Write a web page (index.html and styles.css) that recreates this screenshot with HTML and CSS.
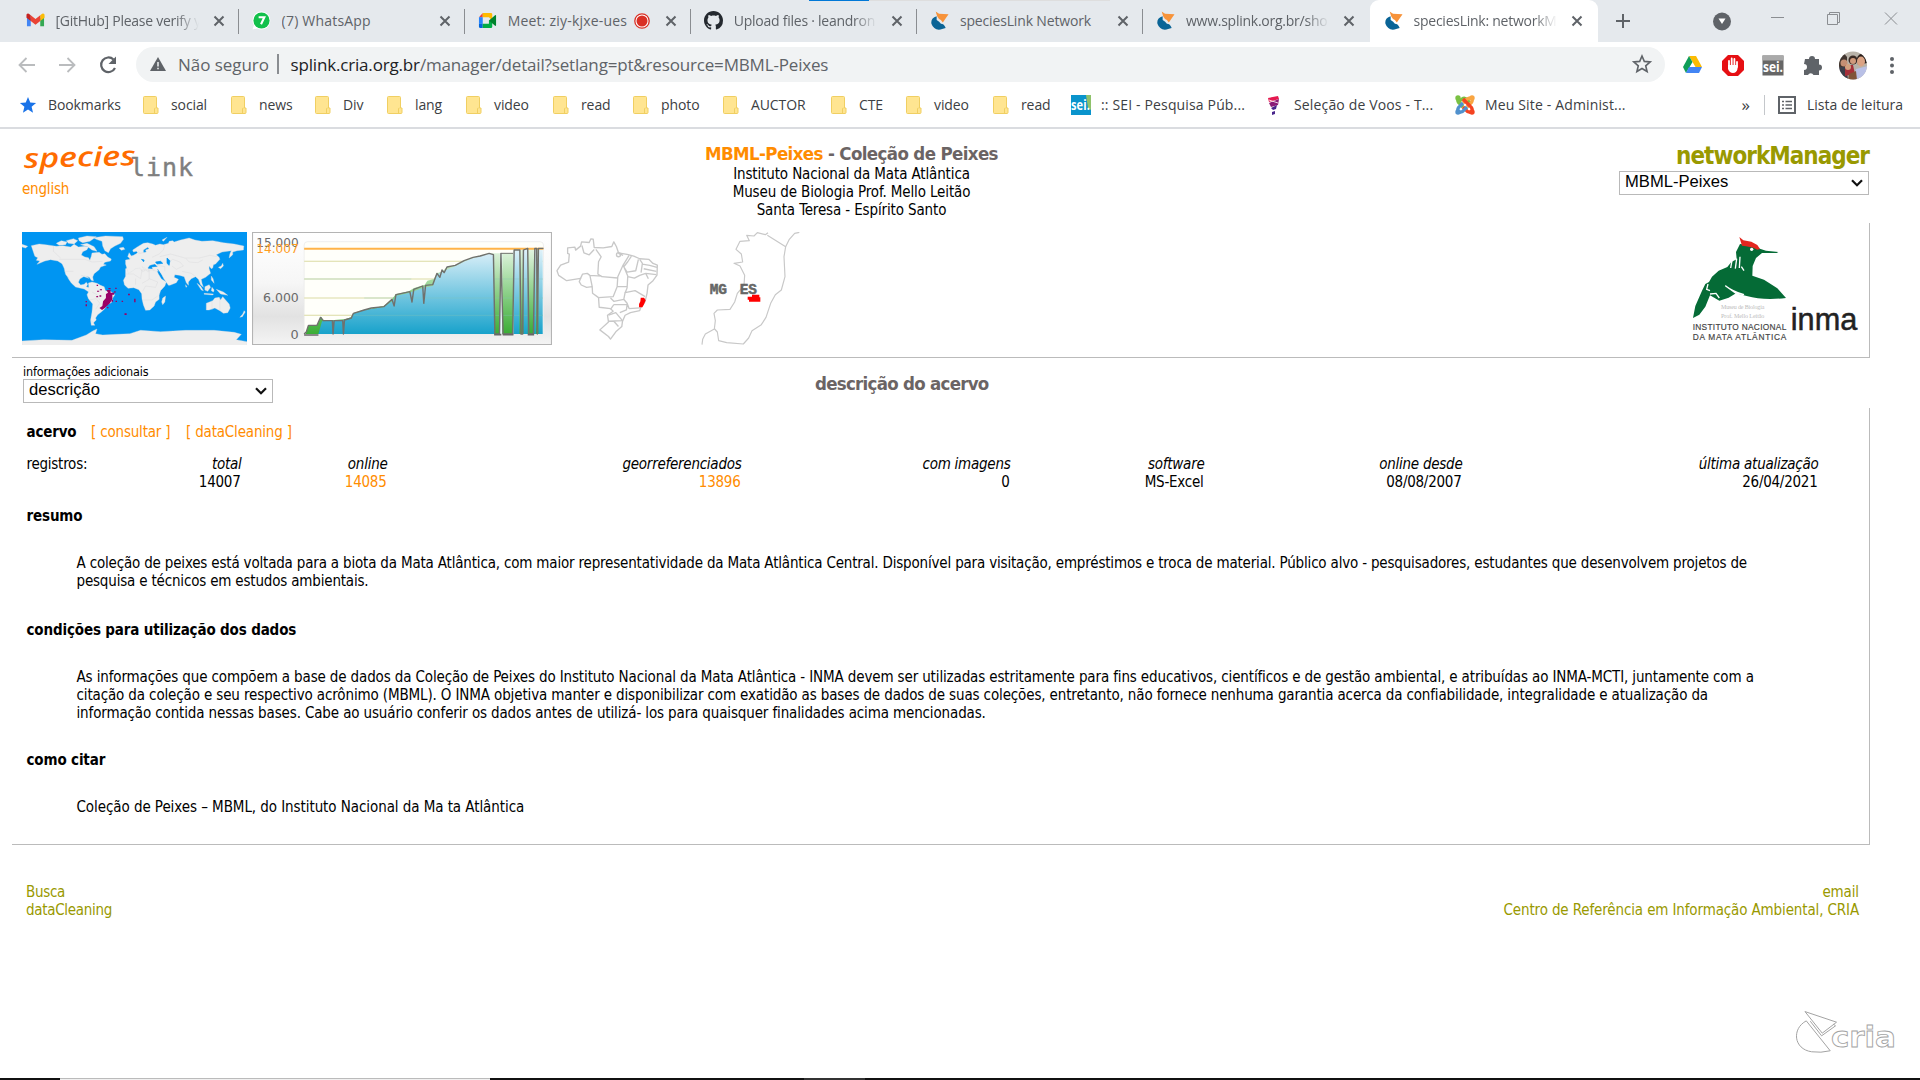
FILE: index.html
```html
<!DOCTYPE html>
<html lang="pt">
<head>
<meta charset="utf-8">
<title>speciesLink: networkManager</title>
<link rel="stylesheet" href="styles.css">
</head>
<body>
<svg class="defs" width="0" height="0">
  <symbol id="close" viewBox="0 0 12 12"><path d="M1.5 1.5l9 9M10.5 1.5l-9 9" stroke="#5f6368" stroke-width="2" fill="none"/></symbol>
  <symbol id="folder" viewBox="0 0 16 18"><path d="M1.500.5h11a1 1 0 0 1 1 1v10.500h1.500v4.500a1 1 0 0 1-1 1H1.500a1 1 0 0 1-1-1v-15a1 1 0 0 1 1-1z" fill="#ffe591" stroke="#f0cf62"/><path d="M11.500 17v-4a1 1 0 0 1 1-1" fill="none" stroke="#f0cf62"/></symbol>
  <symbol id="splink" viewBox="0 0 20 20"><path d="M7 5.500Q.5 7.500 1.500 13.500 4 20.500 11 19.500l5.500-1.500q-1.500-4.500-5-4.500Q10 11 7 9.500z" fill="#0a6496"/><path d="M6 .5l3.500 2.500L19.500 3.500 13.500 12l-2-2.500-2-1-2-3z" fill="#f7933a"/></symbol>
  <symbol id="chev" viewBox="0 0 12 8"><path d="M1 1.200l5 5 5-5" fill="none" stroke="#111" stroke-width="2.200"/></symbol>
</svg>

<div class="tabs">
  <div class="tab">
    <svg class="fav" viewBox="0 0 20 16"><path d="M1 3v11h4V6z" fill="#4285f4"/><path d="M19 3v11h-4V6z" fill="#34a853"/><path d="M15 2.500L17 1a1.600 1.600 0 0 1 2.500 1.500V5L15 8.500z" fill="#fbbc04"/><path d="M5 2.500l5 4 5-4v6l-5 4-5-4z" fill="#ea4335"/><path d="M5 2.500L3 1A1.600 1.600 0 0 0 .5 2.500V5L5 8.500z" fill="#c5221f"/></svg>
    <span class="tab-title fade">[GitHub] Please verify y</span><svg class="x"><use href="#close"/></svg>
  </div>
  <div class="tab">
    <svg class="fav" viewBox="0 0 20 20"><path d="M10 .5a9.500 9.500 0 1 1-4.500 18L.5 19.500 2 15A9.500 9.500 0 0 1 10 .5z" fill="#fff"/><circle cx="10" cy="10" r="8.500" fill="#12c04b"/><path d="M7 6.500h6L9.500 14" fill="none" stroke="#fff" stroke-width="2.200"/></svg>
    <span class="tab-title wide">(7) WhatsApp</span><svg class="x"><use href="#close"/></svg>
  </div>
  <div class="tab">
    <svg class="fav" viewBox="0 0 20 18"><path d="M5 1v4.500H1z" fill="#ea4335"/><path d="M1 5.500h4v7H1z" fill="#2684fc"/><path d="M1 12.500h4V17H2.500A1.500 1.500 0 0 1 1 15.500z" fill="#0066da"/><path d="M5 1h8.500A1.500 1.500 0 0 1 15 2.500V9l-3.500-3.500H5z" fill="#ffba00"/><path d="M5 12.500h6.500V9L15 9v6.500a1.500 1.500 0 0 1-1.500 1.500H5z" fill="#00ac47"/><path d="M11.500 9L18 3.500c.5-.4 1 0 1 .6v9.800c0 .6-.5 1-1 .6z" fill="#00832d"/></svg>
    <span class="tab-title short wide">Meet: ziy-kjxe-ues</span>
    <svg class="rec" viewBox="0 0 16 16"><circle cx="8" cy="8" r="7.200" fill="#fff" stroke="#d93025" stroke-width="1.300"/><circle cx="8" cy="8" r="5.500" fill="#d93025"/></svg>
    <svg class="x"><use href="#close"/></svg>
  </div>
  <div class="tab">
    <svg class="fav" viewBox="0 0 16 16"><path fill="#24292f" d="M8 0C3.580 0 0 3.580 0 8c0 3.540 2.290 6.530 5.470 7.590.4.070.55-.17.55-.38 0-.19-.01-.82-.01-1.490-2.010.37-2.530-.49-2.690-.94-.09-.23-.48-.94-.82-1.130-.28-.15-.68-.52-.01-.53.63-.01 1.080.58 1.230.82.72 1.210 1.870.87 2.330.66.070-.52.28-.87.51-1.070-1.780-.2-3.640-.89-3.640-3.950 0-.87.31-1.590.82-2.150-.08-.2-.36-1.020.08-2.120 0 0 .67-.21 2.200.82.64-.18 1.320-.27 2-.27s1.360.09 2 .27c1.530-1.040 2.200-.82 2.200-.82.44 1.100.16 1.920.08 2.120.51.56.82 1.270.82 2.150 0 3.070-1.870 3.750-3.650 3.950.29.25.54.73.54 1.480 0 1.070-.01 1.930-.01 2.200 0 .21.15.46.55.38A8.010 8.010 0 0 0 16 8c0-4.420-3.580-8-8-8z"/></svg>
    <span class="tab-title fade">Upload files · leandron</span><svg class="x"><use href="#close"/></svg>
  </div>
  <div class="tab"><svg class="fav"><use href="#splink"/></svg><span class="tab-title">speciesLink Network</span><svg class="x"><use href="#close"/></svg></div>
  <div class="tab"><svg class="fav"><use href="#splink"/></svg><span class="tab-title fade">www.splink.org.br/sho</span><svg class="x"><use href="#close"/></svg></div>
  <div class="tab active"><svg class="fav"><use href="#splink"/></svg><span class="tab-title fade">speciesLink: networkM</span><svg class="x"><use href="#close"/></svg></div>
  <svg class="plus" viewBox="0 0 16 16"><path d="M8 1v14M1 8h14" stroke="#5f6368" stroke-width="2"/></svg>
  <svg class="win" viewBox="0 0 200 42"><circle cx="14" cy="21.500" r="9" fill="#5f6368"/><path d="M10.500 18.500h7l-3.500 5.500z" fill="#fff"/><g fill="none" stroke="#8b8e92"><path d="M63 17.500h13M119.500 14.500h10v10h-10zM121.500 14.500v-2h10v10h-2M177 12.500l12 12M189 12.500l-12 12"/></g></svg>
  <div class="topline"></div>
</div>

<div class="toolbar">
  <svg class="nav" viewBox="0 0 118 24"><g fill="none" stroke-width="1.800"><path d="M27 12H12M18.500 5l-7 7 7 7M51 12h15M59.500 5l7 7-7 7" stroke="#babcbe"/><path d="M105.500 6.500A7.300 7.300 0 1 0 107 15" stroke="#5f6368" stroke-width="2.200"/></g><path d="M108 3.500V11h-7.500z" fill="#5f6368"/></svg>
  <div class="omni">
    <svg class="warn" viewBox="0 0 16 14"><path d="M8 0l8 14H0z" fill="#5f6368"/><path d="M8 5v4.500M8 10.700v1.600" stroke="#f1f3f4" stroke-width="1.500"/></svg>
    <span class="insecure">Não seguro</span><span class="bar"></span>
    <span class="url"><b>splink.cria.org.br</b>/manager/detail?setlang=pt&amp;resource=MBML-Peixes</span>
    <svg class="star" viewBox="0 0 20 20"><path d="M10 2l2.300 5.400 5.900.5-4.500 3.900 1.400 5.700-5.100-3-5.100 3 1.400-5.700L1.800 7.900l5.900-.5z" fill="none" stroke="#5f6368" stroke-width="1.600"/></svg>
  </div>
  <svg class="exts" viewBox="0 0 240 40">
    <path d="M15 11h7l6 11h-6.500z" fill="#fbbc04"/><path d="M15 11L9 22l3 6 6.500-11z" fill="#0f9d58"/><path d="M12 28h13l3-6H15z" fill="#4285f4"/>
    <path d="M54 10h10l6 6v9l-6 6H54l-6-6v-9z" fill="#e60f13"/><path d="M55 22v-6m2.700 5v-7.500m2.700 7.500v-7m2.600 8v-5" stroke="#fff" stroke-width="1.800" stroke-linecap="round"/><path d="M54 20h9.500v4q-1 4-4.500 4T54 24z" fill="#fff"/>
    <rect x="88.500" y="10.500" width="21" height="20" fill="#666"/><rect x="88.500" y="10.500" width="21" height="5" fill="#aaa"/><text x="89" y="27" class="sei" textLength="20" lengthAdjust="spacingAndGlyphs">sei.</text>
    <path d="M131 14h4a3 3 0 0 1 6 0h4v5.500a3 3 0 0 1 0 6V30h-5.500a3 3 0 0 0-5.500 0h-4v-5a3 3 0 0 0 0-6z" fill="#5f6368"/>
    <defs><clipPath id="av"><circle cx="179" cy="20.500" r="14"/></clipPath></defs>
    <g clip-path="url(#av)"><rect x="164" y="6" width="30" height="30" fill="#b9b3a9"/><path d="M164 12q5-7 9 0v10h-9z" fill="#41352f"/><circle cx="170" cy="18" r="3.500" fill="#c48f73"/><circle cx="179" cy="15" r="4.500" fill="#3b2b25"/><circle cx="179" cy="16" r="3" fill="#d09a7c"/><path d="M183 13q3-7 8-2l2 7-9 2z" fill="#2a201d"/><ellipse cx="187" cy="16.500" rx="4" ry="5" fill="#dba384"/><path d="M182 24l12-3v14h-15z" fill="#b9c0e6"/><path d="M164 22h8l2 12h-10z" fill="#3b3d48"/><path d="M171 20h8l2 9-10 2z" fill="#a6303a"/><circle cx="174" cy="22" r="3" fill="#d2a17f"/><path d="M175 29l7-3 1 9h-9z" fill="#80543a"/></g>
    <g fill="#5f6368"><circle cx="218" cy="14" r="2"/><circle cx="218" cy="20.500" r="2"/><circle cx="218" cy="27" r="2"/></g>
  </svg>
</div>

<div class="bookmarks">
  <div class="bm first"><svg class="bstar" viewBox="0 0 20 20"><path d="M10 1l2.500 6.200 6.500.5-5 4.300 1.600 6.500L10 15l-5.600 3.500L6 12 1 7.700l6.500-.5z" fill="#1a73e8"/></svg><span>Bookmarks</span></div>
  <div class="bm w88"><svg class="fold"><use href="#folder"/></svg><span>social</span></div>
  <div class="bm w84"><svg class="fold"><use href="#folder"/></svg><span>news</span></div>
  <div class="bm w72"><svg class="fold"><use href="#folder"/></svg><span>Div</span></div>
  <div class="bm w79"><svg class="fold"><use href="#folder"/></svg><span>lang</span></div>
  <div class="bm w87"><svg class="fold"><use href="#folder"/></svg><span>video</span></div>
  <div class="bm w80"><svg class="fold"><use href="#folder"/></svg><span>read</span></div>
  <div class="bm w90"><svg class="fold"><use href="#folder"/></svg><span>photo</span></div>
  <div class="bm w108"><svg class="fold"><use href="#folder"/></svg><span>AUCTOR</span></div>
  <div class="bm w75"><svg class="fold"><use href="#folder"/></svg><span>CTE</span></div>
  <div class="bm w87"><svg class="fold"><use href="#folder"/></svg><span>video</span></div>
  <div class="bm w78"><svg class="fold"><use href="#folder"/></svg><span>read</span></div>
  <div class="bm site w195"><svg class="ico" viewBox="0 0 20 20"><rect width="20" height="20" fill="#0a94cc"/><path d="M15 0h5v15l-3-2z" fill="#8fc26b"/><text x="0" y="15" class="sei" textLength="19" lengthAdjust="spacingAndGlyphs">sei.</text></svg><span>:: SEI - Pesquisa Púb...</span></div>
  <div class="bm site w189"><svg class="ico narrow" viewBox="0 0 18 20"><path d="M2 3l10-2 1 3-10 3z" fill="#e5194f"/><path d="M3 8l10-4-1 6-7 2z" fill="#8b1b77"/><path d="M5 13l6-3-1 4-3 1zM6 17l3-1v3l-3 1z" fill="#48248b"/><path d="M3 5l9 3" stroke="#fff" stroke-width=".8"/></svg><span>Seleção de Voos - T...</span></div>
  <div class="bm site"><svg class="ico" viewBox="0 0 20 20"><g fill="none" stroke-width="3.300"><path d="M3 3q-1 4 2 6l3 3" stroke="#7ac143"/><path d="M4 8q0-2 3-4 3-2 5 1l3 3" stroke="#7ac143"/><path d="M17 3q1 4-2 6l-3 3M8 8l4-4q2-1 5-1" stroke="#f9a541"/><path d="M17 17q1-4-2-6l-3-3M12 8l-4-4" stroke="#f44321" stroke-dasharray="14"/><path d="M17 17q-4 1-6-2l-3-3" stroke="#f44321"/><path d="M3 17q-1-4 2-6l3-3M3 17q4 1 6-2l3-3" stroke="#5091cd"/></g><circle cx="3" cy="3" r="2.700" fill="#7ac143"/><circle cx="17" cy="3" r="2.700" fill="#f9a541"/><circle cx="3" cy="17" r="2.700" fill="#5091cd"/><circle cx="17" cy="17" r="2.700" fill="#f44321"/></svg><span>Meu Site - Administ...</span></div>
  <div class="more">»</div>
  <div class="reading"><svg viewBox="0 0 18 18"><path d="M1 1h16v16H1z" fill="none" stroke="#5f6368" stroke-width="2"/><path d="M4 5.500h2M4 9h2M4 12.500h2M7.500 5.500H14M7.500 9H14M7.500 12.500H14" stroke="#5f6368" stroke-width="1.500"/></svg><span>Lista de leitura</span></div>
</div>

<main>
  <header class="head">
    <div class="brand">
      <svg class="logo" viewBox="0 0 176 36"><text class="lg-species" x="2" y="25" textLength="112" lengthAdjust="spacingAndGlyphs" transform="rotate(-1.500 2 25)">species</text><text class="lg-link" x="108" y="33" textLength="63">link</text></svg>
      <a class="or">english</a>
    </div>
    <div class="title">
      <h1><a class="or">MBML-Peixes</a> - Coleção de Peixes</h1>
      <p>Instituto Nacional da Mata Atlântica</p><p>Museu de Biologia Prof. Mello Leitão</p><p>Santa Teresa - Espírito Santo</p>
    </div>
    <div class="manager">
      <h2>networkManager</h2>
      <div class="select"><span>MBML-Peixes</span><svg><use href="#chev"/></svg></div>
    </div>
  </header>

  <section class="banner">
    <svg class="world" viewBox="62 306 630 339" preserveAspectRatio="none">
      <rect x="62" y="306" width="630" height="339" fill="#0095f2"/>
      <g fill="#eee" stroke="#d8dde0" stroke-width="1">
        <path d="M62 343l16 6-6 5-10-3zM88 347l22-5 18 2 30 5 18-2 22 4 10-8 12 8 18-2 10 2-4 8-12 6-4 10 10 6 10 2 4 8 4-12 2-10 20-2 8 6 8-2 8 10 10 6-2 6-16 4-4 6 8 2-16 6-4 8-14 12-4 10 2 12-6-2-6-10-14-2-12 8-4 10 6 8 10-2 6-6 4 6-4 8 14 2 4 10 10 2-4 4-16-2-14-10-24-6-12-12-10-16 4 4-10-14-4-18-6-14-12-8-20-4-16 4-22 10 8-10-10-2 4-8-8-4z"/>
        <path d="M158 340l14-8 16 4-4 8-18 2zM186 332l20-6 12 6-10 10-16-2zM220 324l24-6 26 2-18 14-20 4-10-6zM226 344l18-4 20 10 8 14-14-4-12-10z"/>
        <path d="M262 323l34-5 48 2 2 8-8 12-16 8-12 8-6 12-10-6-6-14-2-14-16-6z"/>
        <path d="M248 459l10-3 14 4 10 6 10 4 4 12 14 2 12 10-6 10-4 14-12 6-6 12-10 10-10 8-6 10 2 6-8 8 4 8-10 0-2-16 4-24 2-24-12-16-4-12 6-12zM256 572l8 6-8 2z"/>
        <path d="M352 416l16-8 24-3 10 3 14 8 22 2 6 14 8 14 14 10-4 12-12 14-4 14 0 12-10 8-4 12-12 12-12 1-6-16-4-18-1-16-8-12-14-6-16 2-10-10-3-14 6-12z"/>
        <path d="M352 402l0-12 12-2-2-8 12-4 10-6 4-6 4 6 8-2 10-2-2-6 10-4-4-4-12 8 0 8-8 2-6 0-6-6-8 2-2-6 14-10 16-10 12-2 14 4 8 4 12-4 10 2 14-4 2-6 10-2 4 4 18-6 24-6 16 6 20 4 30-2 30 6 30 4 27 6-1 12-18 2-12 4 0 8-10 10 2-12 4-10-26 4-16 8 8 8 2 6-12 14-6 2-2 10-4 2-6-8 0 8 4 14-14 12-12 6 2 12 4 12-8-8-6-16-8-8-12 6-8 10 0 10-6-8-6-18-14-4-12-2-2 8 12 6-6 10-18 8-4 0-12-18-8-16-6-8-16-2-4-10 16-2-8-8-14 4-6 8 4 10-4 2-8-12-8-4 8 12-6 4-8-12-12 2-10 8-10 6z"/>
        <path d="M578 520l18-8 6-8 12-2 4 8 6-10 8 10 10 12 3 12-7 14-12 2-10-8-14-8-16 6-8 0z"/>
        <path d="M62 633l60-4 80 2 40-16 18-12 12-6-4 14 20 4 40-2 36-2 30-10 56 4 70-4 80 0 56 6 20 6-14 16 30 6v14H62z"/>
        <path d="M358 380l4-12 6 10-2 8zM334 354l12-2 4 6-10 3zM228 436l14 3 8 6-10-3zM456 504l8-6-2 18-6 8-3-8zM552 460l10 8 8 14-6-2zM574 470l12-6 4 8-8 12-8-4zM572 490l26 2-2 3-24-2zM606 478l20 8 12 10-20-4zM594 472l6 8-2 6-6-4zM612 412l8-4 4-8 2 8-8 8zM592 438l5 8 3 14-8-10zM520 464l4 6-3 2zM672 562l8-10 4-10 3 4-8 14zM454 330l14-8-10 12z"/>
      </g>
      <path d="M166 388h72l20 8 30-2M150 348v16l20 20M180 424l26 0M352 432h22l20 14 4-26M396 420h38M418 420v28l-20 12M418 446l24 10-6 16-28-4-8 16M402 510h24l16-12M380 464v-18M426 382l20-10 12-12 4-18M448 380l30-8 40 12 40 0 30-8 20 4M470 400l14-12 20 8 10 12-20 10-12-10M440 406l22 4 0 14M520 384l10 12 24 2 14-8M510 424l26 6 10 8M250 510l20-4 10 14-12 18M258 486l14 8 8 16M594 512v28M616 502v40" fill="none" stroke="#d4d4d7" stroke-width="1"/>
      <path d="M396 388l8 2-2 6M468 384l8 8-2 14-6-6zM436 396l14-2 6 6-16 2zM442 418l10 20 4 10" fill="#0095f2" stroke="#0095f2" stroke-width="2"/>
      <path d="M298 480h12v8h10v6h-5v14l-7 12-6 6-8 8-8 6-7-6 8-6 2-14 8-10 0-12 6-4z" fill="#906"/>
      <path d="M271 464h4v4h-4zM272 482h6v3h-6zM280 478h6v3h-6zM270 498h5v4h-5zM279 496h5v4h-5zM323 473h4v4h-4zM320 484h4v4h-4zM313 510h4v5h-4zM324 512h4v4h-4zM341 512h4v4h-4zM359 491h5v5h-5zM376 506h4v11h-4zM240 513h4v4h-4zM240 523h4v6h-4zM349 550h6v5h-6zM300 531h4v4h-4zM304 474h6v4h-6z" fill="#906"/>
    </svg>
    <svg class="chart" viewBox="706 306 840 339" preserveAspectRatio="none">
      <defs>
        <linearGradient id="bg" x1="0" y1="0" x2="0" y2="1"><stop offset="0" stop-color="#fff"/><stop offset=".45" stop-color="#f6f6f6"/><stop offset=".75" stop-color="#e2e2e2"/><stop offset="1" stop-color="#f4f4f4"/></linearGradient>
        <linearGradient id="bl" gradientUnits="userSpaceOnUse" x1="0" y1="356" x2="0" y2="612"><stop offset="0" stop-color="#e2f2fa"/><stop offset="1" stop-color="#18a2cb"/></linearGradient>
        <linearGradient id="gr" gradientUnits="userSpaceOnUse" x1="0" y1="356" x2="0" y2="612"><stop offset="0" stop-color="#e4f5e2"/><stop offset="1" stop-color="#3aad35"/></linearGradient>
      </defs>
      <rect x="707.500" y="307.500" width="837" height="336" fill="url(#bg)" stroke="#b4b4b4" stroke-width="3"/>
      <rect x="852" y="335" width="670" height="278" rx="10" fill="#fffffa" stroke="#e8e8e8" stroke-width="2"/>
      <path d="M852 394h668M852 447h668M852 504h668M852 556h668" stroke="#dcdca4" stroke-width="3"/>
      <path d="M856 612L864 586H888L900 560 906 572 966 568 984 562 990 549 1020 539 1075 528 1098 508 1108 493 1145 484 1160 474 1190 464 1197 452 1215 447 1224 430 1240 424 1252 411 1275 406 1300 392 1325 382 1368 370H1437V612z" fill="url(#gr)"/>
      <path d="M892 612L902 574 966 570 984 566 990 551 1020 541 1075 531 1100 512 1110 497 1145 489 1190 472 1212 468 1224 434 1245 422 1275 409 1300 395 1325 385 1368 372H1384V612zM1438 612V362L1478 358 1480 354H1520V612z" fill="url(#bl)"/>
      <path d="M856 342h660v20H852z" fill="none"/>
      <path d="M852 447h300M1384 447h136M1020 504h500M990 556h530" stroke="#85c4b8" stroke-width="2" opacity=".5"/>
      <path d="M1400 370h7v242h-7z" fill="#e9f6fa"/>
      <path d="M1455 360h11v252h-11zM1478 356h18v256h-18zM1501 356h7v256h-7z" fill="url(#gr)"/>
      <path d="M852 356h670" stroke="#ffb348" stroke-width="6"/>
      <path d="M852 612L858 606 864 586H888L898 562 906 572H931L933 612 936 572H960L962 612 965 570 984 564 990 550 1020 540 1040 534 1075 530 1098 508 1104 528 1109 494 1148 485 1154 516 1159 478 1184 468 1187 520 1192 466 1212 464 1224 430 1232 442 1238 420 1244 428 1252 411 1275 406 1300 392 1325 382 1345 378 1370 370 1382 374 1386 612H1399L1403 370 1409 612H1436L1440 360 1456 360 1459 612H1464L1466 360 1478 355 1481 612H1494L1498 355 1503 355 1505 612 1508 355H1522" fill="none" stroke="#70716d" stroke-width="4" stroke-linejoin="round"/>
      <path d="M1403 370h34" stroke="#70716d" stroke-width="3"/>
      <path d="M852 615h40M1384 614h20M1408 614h30M1478 614h18" stroke="#686868" stroke-width="5"/>
      <g class="axis" text-anchor="end" font-size="36"><text x="837" y="350" fill="#696969" textLength="119" lengthAdjust="spacingAndGlyphs">15.000</text><text x="837" y="369" fill="#ff9d1e" textLength="119" lengthAdjust="spacingAndGlyphs">14.007</text><text x="837" y="515" fill="#696969" textLength="100" lengthAdjust="spacingAndGlyphs">6.000</text><text x="837" y="626" fill="#696969">0</text></g>
    </svg>
    <svg class="brazil" viewBox="48 306 310 339">
      <g fill="none" stroke="#c8c8c8" stroke-width="4" stroke-linejoin="round">
        <path d="M83 353L105 351 107 360 122 348 125 335 148 337 153 326 160 327 163 352 190 353 216 349 222 335 230 350 236 368 262 373 282 378 300 386 328 388 340 400 353 405 352 435 340 452 325 465 322 490 316 515 303 533 300 542 272 548 256 556 248 575 246 590 228 606 212 628 206 620 180 600 206 576 203 556 220 544 212 536 178 532 176 503 158 490 157 470 140 472 124 465 118 455 122 445 80 452 56 436 51 422 62 405 86 396 88 372 83 370z"/>
        <path d="M126 346L132 368 148 374 163 358M168 358L184 380 176 395 174 432 186 440 234 444M122 445L128 432 142 430 150 436 186 438M150 436L157 470M250 376L236 370M268 376L250 405 234 440 232 470 220 500 176 503M234 470H262M250 405L264 438 262 474M275 378L264 395 252 410 262 426 288 422 296 388M300 388L308 400 304 428M308 402L330 406 352 412M312 416L350 424M318 430L350 434M318 430L300 436 284 444 264 440M318 430L326 446M262 474L256 488 286 482 310 496 316 500M256 488L252 508 222 514 212 504M252 508L262 520 268 536 300 534M222 524L262 524M222 524L212 538M262 524L260 540 240 548M206 556L228 548 248 572 206 574M206 574L222 574 236 590"/>
        <circle cx="236" cy="374" r="6"/>
      </g>
      <path d="M303 503h10l5 8-5 12-5 9-10 0 0-10 4-8z" fill="#f00"/>
    </svg>
    <svg class="es" viewBox="480 306 300 339">
      <g fill="none" stroke="#c8c8c8" stroke-width="3.500" stroke-linejoin="round">
        <path d="M778 307L764 310 748 328 737 350 732 380 735 440 724 480 706 494 692 520 678 562 664 584 636 602 626 624 610 642 560 638 536 632 532 606 524 597M737 350L682 316M684 308L676 314 652 308 642 318 620 316 628 332 600 334 588 358 604 372 608 396 582 400 600 408 614 436 612 466 592 490 584 516 570 538 532 540 522 550 526 572 523 597 496 612 488 628 486 644"/>
      </g>
      <text x="509" y="491" class="pix" textLength="52" lengthAdjust="spacingAndGlyphs">MG</text><text x="599" y="491" class="pix" textLength="52" lengthAdjust="spacingAndGlyphs">ES</text>
      <path d="M623 500h13v-6h22v8h3v13h-34v-6h-4z" fill="#f00"/>
    </svg>
    <svg class="inma" viewBox="390 306 510 339">
      <path d="M399 564L406 528 426 482 436 462 447 456 456 440 476 422 502 411 514 396 530 388 528 366 540 342 562 344 602 357 618 362 655 366 650 369 606 369 588 384 578 408 577 437 612 449 652 475 678 504Q610 512 560 498L528 490 506 503 478 512 450 496 436 530 418 554z" fill="#056b36"/>
      <path d="M538 321l12 10 24 4 18 10 8 12-8 2-12-6-22-4-12-2z" fill="#e3261f"/>
      <path d="M496 467Q518 484 552 494L528 490z" fill="#fff" stroke="#fff" stroke-width="4"/><path d="M518 380l-6 34M530 386l-4 30M540 380l-2 34M544 410l8 12M444 462l-4 16 10 4M450 492l18-2 10 14" stroke="#fff" stroke-width="4" fill="none"/><circle cx="575" cy="358" r="5" fill="#fff"/>
      <g class="musb"><text x="483" y="538" textLength="130">Museu de Biologia</text><text x="483" y="564" textLength="130">Prof. Mello Leitão</text></g>
      <g class="instn"><text x="398" y="599" textLength="281">INSTITUTO NACIONAL</text><text x="398" y="630" textLength="281">DA MATA ATLÂNTICA</text></g>
      <text class="inmat" x="692" y="600" textLength="200">inma</text>
    </svg>
  </section>

  <section class="sub">
    <div class="info"><label>informações adicionais</label><div class="select"><span>descrição</span><svg><use href="#chev"/></svg></div></div>
    <h3>descrição do acervo</h3>
  </section>

  <section class="detail">
    <div class="acervo"><b>acervo</b><a class="or consultar">[ consultar ]</a><a class="or clean">[ dataCleaning ]</a></div>
    <div class="reg">
      <span class="lbl">registros:</span><i>total</i><i>online</i><i>georreferenciados</i><i>com imagens</i><i>software</i><i>online desde</i><i>última atualização</i>
      <span></span><span>14007</span><a class="or">14085</a><a class="or">13896</a><span>0</span><span>MS-Excel</span><span>08/08/2007</span><span>26/04/2021</span>
    </div>
    <h4>resumo</h4>
    <p>A coleção de peixes está voltada para a biota da Mata Atlântica, com maior representatividade da Mata Atlântica Central. Disponível para visitação, empréstimos e troca de material. Público alvo - pesquisadores, estudantes que desenvolvem projetos de<br>pesquisa e técnicos em estudos ambientais.</p>
    <h4>condições para utilização dos dados</h4>
    <p class="terms">As informações que compõem a base de dados da Coleção de Peixes do Instituto Nacional da Mata Atlântica - INMA devem ser utilizadas estritamente para fins educativos, científicos e de gestão ambiental, e atribuídas ao INMA-MCTI, juntamente com a<br>citação da coleção e seu respectivo acrônimo (MBML). O INMA objetiva manter e disponibilizar com exatidão as bases de dados de suas coleções, entretanto, não fornece nenhuma garantia acerca da confiabilidade, integralidade e atualização da<br>informação contida nessas bases. Cabe ao usuário conferir os dados antes de utilizá- los para quaisquer finalidades acima mencionadas.</p>
    <h4>como citar</h4>
    <p class="cite">Coleção de Peixes – MBML, do Instituto Nacional da Ma ta Atlântica</p>
  </section>

  <footer>
    <div class="fl"><a>Busca</a><a>dataCleaning</a></div>
    <div class="fr"><a>email</a><a>Centro de Referência em Informação Ambiental, CRIA</a></div>
  </footer>
  <div class="cria">
    <svg viewBox="1000 570 310 140"><g fill="none" stroke="#a3a3a3" stroke-width="3"><path d="M1030 577l95 32-43 33zM1046 606l34 44 42-30-6-5M1034 605C990 628 995 690 1050 698q28 4 56-3z"/></g><text class="criat" x="1108" y="684" textLength="196" lengthAdjust="spacingAndGlyphs">cria</text></svg>
  </div>
</main>
<div class="taskbar"><div class="t1"></div><div class="t2"></div><div class="t3"></div><div class="t4"></div></div>
</body>
</html>
```
FILE: styles.css
```css
* { box-sizing: border-box; }
body { margin: 0; width: 1920px; height: 1080px; overflow: hidden; background: #fff; display: flex; flex-direction: column;
  font: 15px/18px "DejaVu Sans Condensed", "DejaVu Sans", sans-serif; font-stretch: condensed; color: #000; }
h1, h2, h3, h4, p { margin: 0; }
.defs { position: absolute; }
svg { display: block; flex: none; overflow: visible; }
.or { color: #ff8c00; }

/* browser tabs */
.tabs { position: relative; height: 42px; flex: none; background: #e5e9ed; display: flex; align-items: center; padding-left: 13px; font: 14px "Open Sans", sans-serif; color: #5f6368; }
.tab { width: 226.1px; height: 42px; display: flex; align-items: center; padding: 0 0 1px 12.5px; background: linear-gradient(#8a8d91, #8a8d91) right 9px / 1.5px 25px no-repeat; flex: none; }
.tab:nth-child(6) { background: none; }
.tab.active { width: 228px; background: #fff; border-radius: 9px 9px 0 0; padding-left: 14px; }
.fav { width: 19px; height: 19px; margin-right: 11px; }
.tab-title { width: 146px; white-space: nowrap; overflow: hidden; letter-spacing: -.15px; }
.tab-title.wide { letter-spacing: .2px; }
.tab-title.short { width: 124px; }
.fade { letter-spacing: -.25px; -webkit-mask-image: linear-gradient(90deg, #000 82%, transparent 98%); mask-image: linear-gradient(90deg, #000 82%, transparent 98%); }
.x { width: 12px; height: 12px; margin-left: 11px; }
.rec { width: 16px; height: 16px; margin: 0 11px 0 2px; }
.rec + .x { margin-left: 4px; }
.plus { width: 16px; height: 16px; margin-left: 17px; }
.win { width: 200px; height: 42px; margin-left: 77px; }
.topline { position: absolute; left: 809px; top: 0; width: 301px; height: 1px; background: linear-gradient(90deg, #0078d7 60px, #dedede 60px); }

/* address bar */
.toolbar { height: 45px; flex: none; display: flex; align-items: center; padding-left: 8px; font: 17px "Open Sans", sans-serif; }
.nav { width: 118px; height: 24px; }
.omni { margin-left: 10px; width: 1529px; height: 35px; border-radius: 18px; background: #f1f3f4; display: flex; align-items: center; padding: 0 13px 1px 14px; color: #5f6368; }
.warn { width: 16px; height: 14px; }
.insecure { width: 89px; margin-left: 12px; white-space: nowrap; letter-spacing: -.05px; }
.bar { width: 1.5px; height: 20px; background: #8a8d91; margin: 0 12px 0 10px; }
.url { letter-spacing: -.17px; flex: 1; white-space: nowrap; }
.url b { font-weight: 400; color: #202124; }
.star { width: 20px; height: 20px; }
.exts { width: 240px; height: 40px; margin-left: 9px; }
.sei { font: bold 14px "Open Sans", sans-serif; fill: #fff; }

/* bookmarks */
.bookmarks { height: 42px; flex: none; border-bottom: 2px solid #dadce0; display: flex; align-items: center; padding: 0 17px 5px 19px; font: 14px "Open Sans", sans-serif; color: #3c4043; }
.bm { display: flex; align-items: center; white-space: nowrap; letter-spacing: -.1px; flex: none; }
.bm.first { width: 124px; }
.bm.site { letter-spacing: .15px; }
.bm .bstar { width: 18px; height: 18px; margin-right: 11px; }
.fold { width: 16px; height: 18px; margin-right: 12px; }
.ico { width: 20px; height: 20px; margin-right: 10px; }
.ico.narrow { width: 18px; }
.w72 { width: 72px; } .w75 { width: 75px; } .w78 { width: 78px; } .w79 { width: 79px; } .w80 { width: 80px; } .w84 { width: 84px; }
.w87 { width: 87px; } .w88 { width: 88px; } .w90 { width: 90px; } .w108 { width: 108px; } .w189 { width: 189px; } .w195 { width: 195px; }
.more { margin-left: auto; font-size: 17px; padding-right: 14px; }
.reading { border-left: 1px solid #c4c7cb; height: 20px; padding-left: 13px; display: flex; align-items: center; white-space: nowrap; letter-spacing: 0; }
.reading svg { width: 18px; height: 18px; margin-right: 11px; }

/* page */
main { flex: 1; display: flex; flex-direction: column; min-height: 0; }
.head { height: 94px; flex: none; display: grid; grid-template-columns: 560px 583px 726px; }
.brand { padding: 14px 0 0 22px; }
.logo { width: 176px; height: 36px; }
.brand a { display: block; margin-top: 1px; letter-spacing: -.2px; }
.lg-species { font: italic 600 27px "Open Sans", sans-serif; fill: #ff6c00; }
.lg-link { font: 25px "DejaVu Sans Mono", monospace; fill: #7f7f7f; stroke: #7f7f7f; stroke-width: .4; }
.title { text-align: center; padding-top: 14px; letter-spacing: -.13px; }
h1, h3 { font-size: 18.500px; line-height: 22px; color: #6b6464; letter-spacing: -.62px; }
.manager { display: flex; flex-direction: column; align-items: flex-end; padding-top: 13px; }
h2 { font-size: 24px; line-height: 29px; color: #990; letter-spacing: -1px; }
.select { width: 250px; height: 24px; border: 1px solid #b9b9b9; display: flex; align-items: center; justify-content: space-between; padding: 0 5px; font: 16.600px/20px "Liberation Sans", sans-serif; background: #fff; }
.select span { margin-top: -2px; }
.select svg { width: 12px; height: 8px; }
.banner { height: 135px; flex: none; margin: 0 50px 0 12px; border: solid #bbb; border-width: 0 1px 1px 0; display: flex; padding: 9px 9px 0 10px; }
.world { width: 225px; height: 113px; overflow: hidden; }
.chart { width: 300px; height: 113px; margin-left: 5px; }
.axis { font-family: "DejaVu Sans", sans-serif; font-stretch: normal; }
.brazil { width: 103px; height: 113px; margin-left: 4px; }
.es { width: 100px; height: 113px; margin-left: 41px; overflow: hidden; }
.pix { font: bold 42px "Liberation Mono", monospace; fill: #666; stroke: #666; stroke-width: 1.5; }
.inma { width: 170px; height: 113px; margin-left: auto; }
.musb { font: 18px "Liberation Serif", serif; fill: #bbb; }
.instn { font: 25px "Liberation Sans", sans-serif; fill: #444; stroke: #444; stroke-width: .5; }
.inmat { font: 92px "Liberation Sans", sans-serif; fill: #222; stroke: #222; stroke-width: 1.5; }
.sub { height: 50px; flex: none; display: flex; padding-left: 23px; }
.info { padding-top: 4px; width: 250px; }
.info label { display: block; font-size: 12.500px; line-height: 17px; letter-spacing: -.17px; white-space: nowrap; padding-top: 1px; margin-bottom: -1px; }
.sub h3 { margin: 15px 0 0 542px; white-space: nowrap; letter-spacing: -.72px; }
.detail { height: 437px; flex: none; margin: 0 50px 0 12px; border: solid #bbb; border-width: 0 1px 1px 0; padding: 15px 0 0 14.5px; letter-spacing: -.18px; }
.acervo { display: flex; white-space: nowrap; }
.acervo b { width: 64.5px; }
.acervo .consultar { width: 95px; }
.reg { margin-top: 14px; display: grid; grid-template-columns: 0 215px 146px 354px 269px 194px 258px 356px; text-align: right; letter-spacing: -.25px; }
.reg > :nth-child(n+9) { padding-right: 1px; }
.lbl { white-space: nowrap; }
h4 { font-size: 15px; line-height: 18px; margin-top: 16px; letter-spacing: -.15px; }
.detail p { margin: 29px 0 0 50px; white-space: nowrap; }
.detail .terms { letter-spacing: -.135px; }
.detail .cite { letter-spacing: -.07px; }
.detail p + h4 { margin-top: 31px; }
.detail .terms + h4 { margin-top: 29px; }
footer { height: 76px; flex: none; display: flex; justify-content: space-between; padding: 38px 61px 0 26px; color: #990; letter-spacing: -.13px; }
footer a { display: block; }
.fl { letter-spacing: -.3px; }
.fr { text-align: right; }
.cria { margin-top: auto; display: flex; justify-content: flex-end; padding: 0 22px 22px 0; }
.cria svg { width: 103px; height: 47px; }
.criat { font: bold 84px "DejaVu Sans", sans-serif; fill: #fff; stroke: #a3a3a3; stroke-width: 2.5; }
.taskbar { height: 2px; flex: none; display: flex; background: #111; }
.t1 { width: 60px; }
.t2 { width: 430px; background: linear-gradient(#bbb 1px, #f0f0f0 1px); }
.t3 { width: 314px; }
.t4 { width: 61px; background: #333; }
```
